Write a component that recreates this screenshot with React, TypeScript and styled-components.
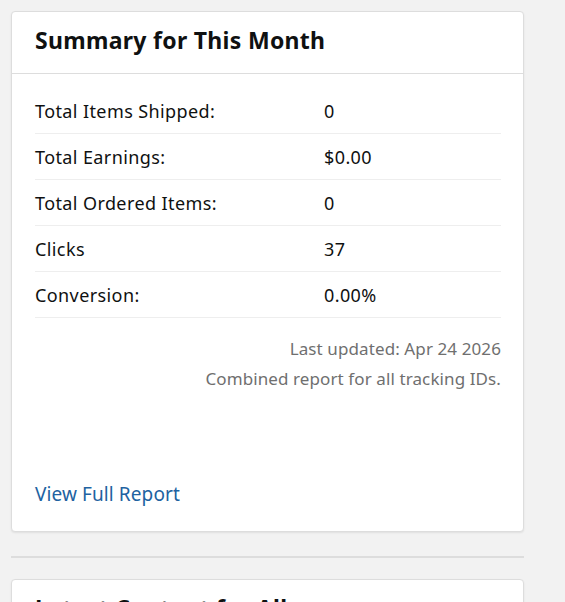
import React from "react";
import styled, { createGlobalStyle } from "styled-components";

const GlobalStyle = createGlobalStyle`
  html, body {
    margin: 0;
    padding: 0;
    background: #f2f2f2;
    font-family: "Noto Sans", "Liberation Sans", Arial, sans-serif;
    color: #0f1111;
  }
`;

type Stat = { label: string; value: string };

const stats: Stat[] = [
  { label: "Total Items Shipped:", value: "0" },
  { label: "Total Earnings:", value: "$0.00" },
  { label: "Total Ordered Items:", value: "0" },
  { label: "Clicks", value: "37" },
  { label: "Conversion:", value: "0.00%" },
];

const App = () => {
  return (
    <>
      <GlobalStyle />
      <Page>
        <Card>
          <CardHeader>
            <Title>Summary for This Month</Title>
          </CardHeader>
          <CardBody>
            <StatList>
              {stats.map((s) => (
                <StatRow key={s.label}>
                  <Label>{s.label}</Label>
                  <Value>{s.value}</Value>
                </StatRow>
              ))}
            </StatList>
            <Notes>
              <Note>Last updated: Apr 24 2026</Note>
              <Note>Combined report for all tracking IDs.</Note>
            </Notes>
            <ReportLink href="#">View Full Report</ReportLink>
          </CardBody>
        </Card>
        <Separator />
        <Card>
          <CardHeader>
            <Title>Latest Content for All</Title>
          </CardHeader>
        </Card>
      </Page>
    </>
  );
};

export default App;

const Page = styled.div`
  width: 513px;
  padding: 11px 0 0 11px;
  display: flex;
  flex-direction: column;
`;

const Card = styled.div`
  background: #ffffff;
  border: 1px solid #dddddd;
  border-radius: 4px;
  box-shadow: rgba(0, 0, 0, 0.08) 0px 1px 2px 0px;
`;

const CardHeader = styled.div`
  height: 62px;
  padding: 0 23px 6px;
  box-sizing: border-box;
  display: flex;
  align-items: center;
  border-bottom: 1px solid #dddddd;
`;

const Title = styled.h2`
  margin: 0;
  font-size: 23px;
  font-weight: 700;
  letter-spacing: 0.3px;
  color: #0f1111;
`;

const CardBody = styled.div`
  padding: 14px 22px 25px 23px;
  display: flex;
  flex-direction: column;
`;

const StatList = styled.div`
  display: flex;
  flex-direction: column;
`;

const StatRow = styled.div`
  height: 45px;
  display: grid;
  grid-template-columns: 289px 1fr;
  align-items: center;
  border-bottom: 1px solid #eeeeee;
  font-size: 18px;
  letter-spacing: 0.4px;
`;

const Label = styled.span`
  color: #0f1111;
`;

const Value = styled.span`
  color: #0f1111;
`;

const Notes = styled.div`
  margin-top: 19px;
  display: flex;
  flex-direction: column;
  align-items: flex-end;
  gap: 7px;
`;

const Note = styled.div`
  font-size: 17px;
  line-height: 23px;
  color: #6f6f6f;
  letter-spacing: 0.1px;
`;

const ReportLink = styled.a`
  margin-top: 92px;
  font-size: 19px;
  line-height: 24px;
  color: #2162a1;
  text-decoration: none;
  letter-spacing: 0.1px;
  align-self: flex-start;
`;

const Separator = styled.div`
  height: 2px;
  background: #dddddd;
  margin: 24px 0 21px;
`;
